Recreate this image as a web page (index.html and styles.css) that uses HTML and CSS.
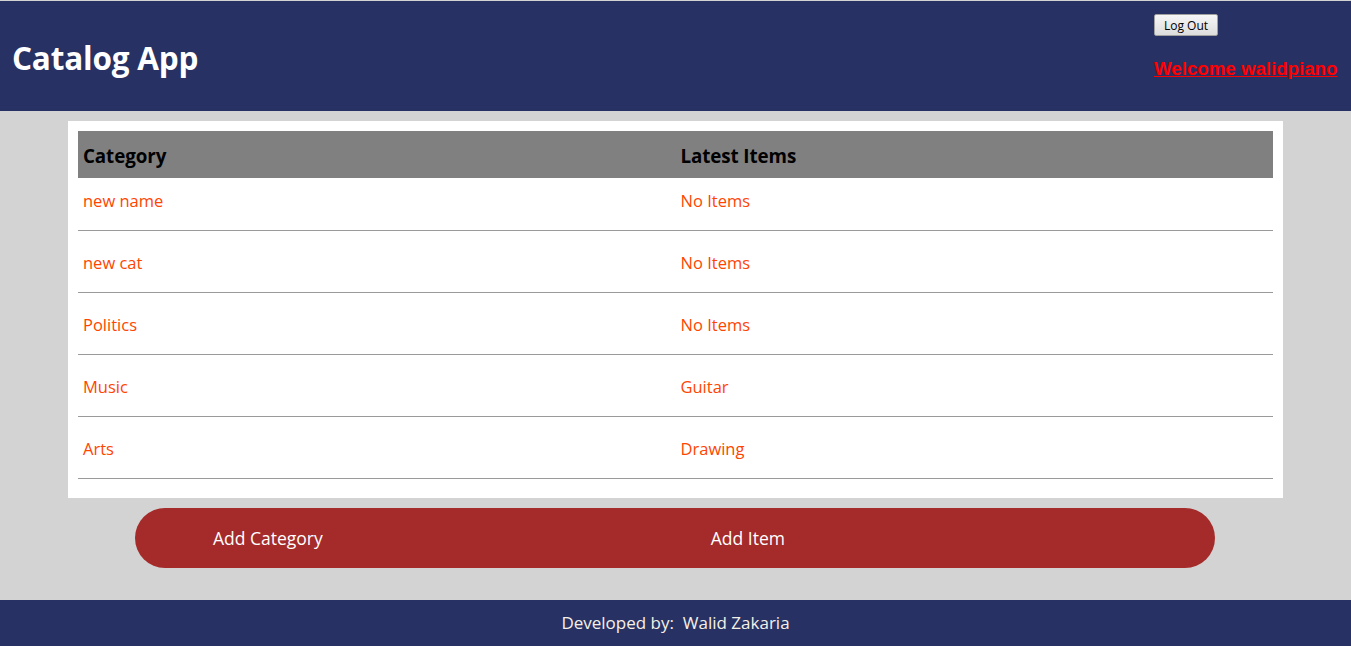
FILE: index.html
```html
<!DOCTYPE html>
<html>
<head>
<meta charset="utf-8">
<title>Catalog App</title>
<link rel="stylesheet" href="styles.css">
</head>
<body>
<div class="page">
  <header class="topbar">
    <h1 class="brand">Catalog App</h1>
    <div class="user">
      <button class="logout">Log Out</button>
      <a class="welcome" href="#">Welcome walidpiano</a>
    </div>
  </header>
  <main class="main">
    <section class="card">
      <div class="table">
        <div class="row head">
          <div class="cell">Category</div>
          <div class="cell">Latest Items</div>
        </div>
        <div class="row first">
          <div class="cell"><a href="#">new name</a></div>
          <div class="cell"><a href="#">No Items</a></div>
        </div>
        <div class="row">
          <div class="cell"><a href="#">new cat</a></div>
          <div class="cell"><a href="#">No Items</a></div>
        </div>
        <div class="row">
          <div class="cell"><a href="#">Politics</a></div>
          <div class="cell"><a href="#">No Items</a></div>
        </div>
        <div class="row">
          <div class="cell"><a href="#">Music</a></div>
          <div class="cell"><a href="#">Guitar</a></div>
        </div>
        <div class="row">
          <div class="cell"><a href="#">Arts</a></div>
          <div class="cell"><a href="#">Drawing</a></div>
        </div>
      </div>
    </section>
    <nav class="actions">
      <a class="action add-cat" href="#">Add Category</a>
      <a class="action add-item" href="#">Add Item</a>
    </nav>
  </main>
  <footer class="footer">Developed by:&nbsp; Walid Zakaria</footer>
</div>
</body>
</html>
```
FILE: styles.css
```css
html, body {
  margin: 0;
  padding: 0;
}
body {
  background: #d3d3d3;
  font-family: "Open Sans", "Noto Sans", sans-serif;
}
.page {
  height: 100vh;
  box-sizing: border-box;
  padding-top: 1px;
  display: flex;
  flex-direction: column;
}
.topbar {
  height: 110px;
  flex: none;
  background: #283163;
  display: flex;
  justify-content: space-between;
  align-items: flex-start;
  box-sizing: border-box;
  padding: 0 13px 0 12px;
}
.brand {
  margin: 0;
  align-self: center;
  color: #fff;
  font-size: 31.5px;
  font-weight: 700;
  letter-spacing: -0.2px;
  padding-top: 3px;
}
.user {
  display: flex;
  flex-direction: column;
  align-items: flex-start;
  padding-top: 13px;
  width: 184px;
}
.logout {
  font-family: "Open Sans", sans-serif;
  font-size: 12px;
  height: 22px;
  padding: 0 9px;
  color: #000;
  background: linear-gradient(#f6f6f6, #dddddd);
  border: 1px solid #a0a0a0;
  border-radius: 2px;
}
.welcome {
  margin-top: 22px;
  color: #ff0000;
  font-family: "Liberation Sans", Arial, sans-serif;
  font-weight: 700;
  font-size: 18.7px;
  text-decoration: underline;
}
.main {
  flex: 1;
  display: flex;
  flex-direction: column;
  align-items: center;
  padding-top: 10px;
}
.card {
  width: 1215px;
  box-sizing: border-box;
  background: #fff;
  padding: 10px 10px 19px 10px;
}
.table {
  display: flex;
  flex-direction: column;
}
.row {
  display: flex;
  height: 62px;
  box-sizing: border-box;
  border-bottom: 1px solid #9a9a9a;
  align-items: center;
  padding-top: 2px;
}
.row.head {
  height: 47px;
  background: #808080;
  border-bottom: none;
  font-weight: 700;
  font-size: 18.8px;
  letter-spacing: -0.1px;
  color: #000;
  padding-top: 2px;
}
.row.first {
  height: 53px;
  align-items: flex-start;
  padding-top: 11px;
}
.cell {
  flex: 1;
  padding: 0 5px;
}
.cell a {
  color: #ff4500;
  text-decoration: none;
  font-size: 16.5px;
}
.actions {
  margin-top: 10px;
  margin-right: 1px;
  width: 1080px;
  height: 60px;
  background: #a52a2a;
  border-radius: 30px;
  display: flex;
  align-items: center;
  padding-left: 78px;
  box-sizing: border-box;
}
.action {
  color: #fff;
  text-decoration: none;
  font-size: 17.5px;
}
.add-item {
  margin-left: 388px;
}
.footer {
  height: 46px;
  flex: none;
  background: #283163;
  color: #f5f0e6;
  font-size: 17px;
  display: flex;
  align-items: center;
  justify-content: center;
  padding-bottom: 2px;
  box-sizing: border-box;
}
```
